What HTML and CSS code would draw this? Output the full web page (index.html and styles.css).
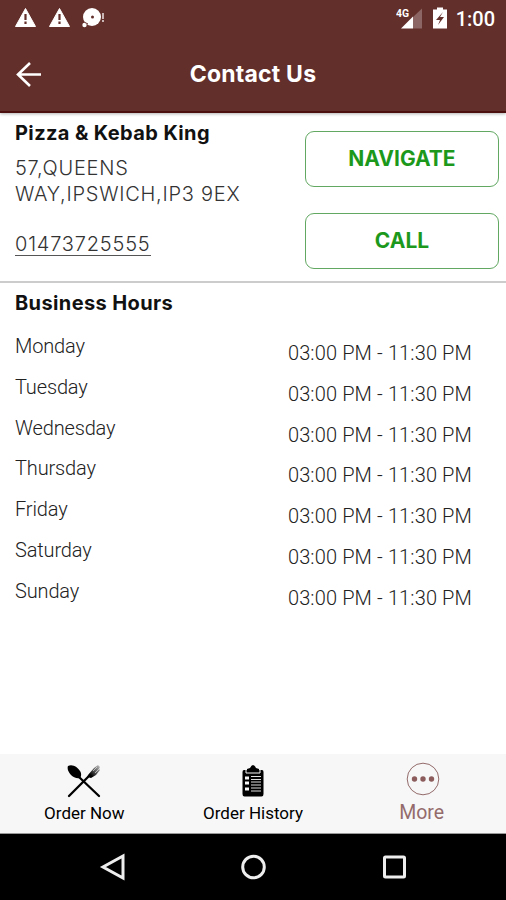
FILE: index.html
```
<!DOCTYPE html>
<html lang="en">
<head>
    <meta charset="UTF-8">
    <meta name="viewport" content="width=device-width, initial-scale=1.0">
    <title>Contact Us</title>
    <link rel="stylesheet" href="styles.css">
</head>
<body>
    <header class="header">
        <div class="status-bar">
            <svg class="alerts" width="96" height="30" viewBox="0 0 96 30">
                <path d="M11.500 8.500L21.500 26.500H1.500z M45.500 8.500L55.500 26.500H35.500z" fill="#fff" stroke="#fff" stroke-linejoin="round"/>
                <path d="M11.500 14v6M11.500 21.500v2.500M45.500 14v6M45.500 21.500v2.500" stroke="#632f2b" stroke-width="2.200"/>
                <circle cx="78" cy="17" r="9" fill="#fff"/>
                <circle cx="70.500" cy="25" r="2.200" fill="#fff"/>
                <path d="M71 22.500l3 1.500" stroke="#632f2b"/>
                <circle cx="78.500" cy="17" r="1.500" fill="#632f2b"/>
                <path d="M89 13v6M89 20v2" stroke="#c9b5b3" stroke-width="2"/>
            </svg>
            <div class="status-right">
                <svg width="54" height="30" viewBox="0 0 54 30">
                    <text class="network" x="0" y="17" textLength="13" lengthAdjust="spacingAndGlyphs">4G</text>
                    <path d="M5 28.500L17 16.500v12z" fill="#fff"/>
                    <path d="M17 17L26 8.500v20h-9z" fill="#8c6664"/>
                    <path d="M37 9.500h4V7.500h6v2h4v19H37z" fill="#fff"/>
                    <path d="M47 12l-7 8h4l-2 5 6-8h-4z" fill="#632f2b"/>
                </svg>
                <span class="time">1:00</span>
            </div>
        </div>
        <div class="title-bar">
            <svg class="back" width="28" height="28" viewBox="0 0 28 28">
                <path d="M27 14.500H4M16 3L4 14.500l12 11.500" fill="none" stroke="#fff" stroke-width="2.600"/>
            </svg>
            <h1>Contact Us</h1>
        </div>
    </header>

    <section class="contact">
        <div class="info">
            <h2 class="name">Pizza &amp; Kebab King</h2>
            <p class="address">57,QUEENS<br>WAY,IPSWICH,IP3 9EX</p>
            <a class="phone">01473725555</a>
        </div>
        <div class="buttons">
            <button class="navigate">NAVIGATE</button>
            <button class="call">CALL</button>
        </div>
    </section>

    <section class="hours">
        <h2>Business Hours</h2>
        <div class="row"><span class="day">Monday</span><span class="hour">03:00 PM - 11:30 PM</span></div>
        <div class="row"><span class="day">Tuesday</span><span class="hour">03:00 PM - 11:30 PM</span></div>
        <div class="row"><span class="day">Wednesday</span><span class="hour">03:00 PM - 11:30 PM</span></div>
        <div class="row"><span class="day">Thursday</span><span class="hour">03:00 PM - 11:30 PM</span></div>
        <div class="row"><span class="day">Friday</span><span class="hour">03:00 PM - 11:30 PM</span></div>
        <div class="row"><span class="day">Saturday</span><span class="hour">03:00 PM - 11:30 PM</span></div>
        <div class="row"><span class="day">Sunday</span><span class="hour">03:00 PM - 11:30 PM</span></div>
    </section>

    <nav class="tabs">
        <div class="tab">
            <svg width="34" height="34" viewBox="0 0 34 34">
                <defs>
                    <linearGradient id="fork" x1="0" y1="1" x2="1" y2="0">
                        <stop offset=".25" stop-color="#000"/>
                        <stop offset="1" stop-color="#ccc"/>
                    </linearGradient>
                </defs>
                <path d="M12 13L32 32M21 13L2 32" stroke="#000" stroke-width="2.300" stroke-linecap="round"/>
                <path d="M1 2C5-.5 11 3 13 7c2 3 1 6 0 7-3 1-7-1-9-3C1 8 0 4 1 2z"/>
                <path d="M21 11l6-7 4-3 2 2-1 2 1 1-4 5-5 3-4-1z" fill="url(#fork)"/>
                <path d="M26 7l4-4M28 9l4-4" stroke="#f7f7f7" stroke-width=".6"/>
            </svg>
            <span>Order Now</span>
        </div>
        <div class="tab">
            <svg width="34" height="34" viewBox="0 0 34 34">
                <path d="M8 6h18q1.500 0 1.500 2v22q0 2.500-2 2.500H8.500q-2 0-2-2.500V8q0-2 1.500-2z"/>
                <path d="M10 6v3h14V6" fill="none" stroke="#f7f7f7"/>
                <path d="M11 8V5l3-1q3-6 6 0l3 1v3z"/>
                <path d="M9 14h4M9 19h4M9 25h4" stroke="#f7f7f7" stroke-width="3"/>
                <path d="M15 12.500h10M15 15.500h10M15 18h10M15 21h10M15 24h10M15 27h10" stroke="#ddd" stroke-width="1"/>
            </svg>
            <span>Order History</span>
        </div>
        <div class="tab active">
            <svg width="34" height="34" viewBox="0 0 34 34">
                <circle cx="18" cy="15" r="15.800" fill="none" stroke="#946b6b"/>
                <circle cx="9.500" cy="15" r="2.700" fill="#8c5c5c"/>
                <circle cx="18" cy="15" r="2.700" fill="#8c5c5c"/>
                <circle cx="26.500" cy="15" r="2.700" fill="#8c5c5c"/>
            </svg>
            <span>More</span>
        </div>
    </nav>

    <footer class="system-nav">
        <svg width="28" height="28" viewBox="0 0 28 28"><path d="M25 3v22L5 14z"/></svg>
        <svg width="28" height="28" viewBox="0 0 28 28"><circle cx="14.500" cy="14" r="10.800"/></svg>
        <svg width="28" height="28" viewBox="0 0 28 28"><rect x="4.500" y="4" width="20" height="20" rx="1"/></svg>
    </footer>
</body>
</html>
```
FILE: styles.css
```
* {
    box-sizing: border-box;
}
body {
    margin: 0;
    width: 506px;
    height: 900px;
    display: flex;
    flex-direction: column;
    background-color: #fff;
    font-family: Roboto, sans-serif;
    overflow: hidden;
}
h1, h2, p {
    margin: 0;
}
.header {
    height: 113px;
    background-color: #632f2b;
    border-bottom: 2px solid #4c110f;
    box-shadow: 0 1px 3px rgba(0, 0, 0, 0.3);
    color: #fff;
    flex-shrink: 0;
}
.status-bar {
    height: 36px;
    padding: 0 11px 0 14px;
    display: flex;
    justify-content: space-between;
}
.status-right {
    display: flex;
    gap: 6px;
}
.network {
    font: bold 11px Roboto, sans-serif;
    fill: #fff;
}
.time {
    font-size: 20px;
    font-weight: 500;
    line-height: 38px;
}
.title-bar {
    height: 76px;
    display: grid;
    grid-template-columns: 28px 1fr 28px;
    align-items: center;
    padding: 0 14px;
}
.title-bar h1 {
    font: 700 23px Inter, sans-serif;
    letter-spacing: 0.2px;
    text-align: center;
}
.contact {
    height: 170px;
    display: flex;
    justify-content: space-between;
    padding: 0 7px 0 15px;
    border-bottom: 2px solid #ccc;
    font-family: Inter, sans-serif;
    flex-shrink: 0;
}
.info h2, .hours h2 {
    font: 700 20px/26px Inter, sans-serif;
    letter-spacing: 0.38px;
    color: #111;
}
.name {
    padding-top: 7px;
}
.address {
    margin-top: 9px;
    font-size: 20px;
    font-weight: 300;
    line-height: 26px;
    letter-spacing: 0.75px;
    color: #333;
    white-space: nowrap;
}
.phone {
    display: inline-block;
    margin-top: 26px;
    font-size: 20px;
    font-weight: 300;
    line-height: 22px;
    letter-spacing: 0.8px;
    border-bottom: 1px solid #555;
    color: #333;
}
.buttons {
    display: flex;
    flex-direction: column;
    gap: 26px;
    padding-top: 18px;
}
.buttons button {
    width: 194px;
    height: 56px;
    padding: 0 0 2px;
    border: 1px solid #62a862;
    border-radius: 9px;
    background-color: #fff;
    color: #1c991c;
    font: 700 21px Inter, sans-serif;
}
.hours {
    flex: 1;
    padding: 7px 34px 0 15px;
}
.row {
    height: 40.8px;
    display: flex;
    justify-content: space-between;
    font-size: 20px;
    font-weight: 300;
    line-height: 26px;
    color: #222;
}
.hours h2 {
    margin-bottom: 17px;
}
.day {
    letter-spacing: -0.15px;
}
.hour {
    padding-top: 7px;
    letter-spacing: 0.13px;
}
.tabs {
    height: 80px;
    display: grid;
    grid-template-columns: repeat(3, 1fr);
    background-color: #f7f7f7;
    border-bottom: 1px solid #999;
}
.tab {
    display: flex;
    flex-direction: column;
    align-items: center;
    padding-top: 10px;
    font-size: 17px;
    line-height: 30px;
}
.tab svg {
    overflow: visible;
}
.active {
    color: #946b6b;
    font-size: 19.5px;
}
.system-nav {
    height: 66px;
    display: flex;
    justify-content: center;
    gap: 113px;
    padding-top: 19px;
    background-color: #000;
}
.system-nav svg {
    fill: none;
    stroke: #eee;
    stroke-width: 3;
}
```
